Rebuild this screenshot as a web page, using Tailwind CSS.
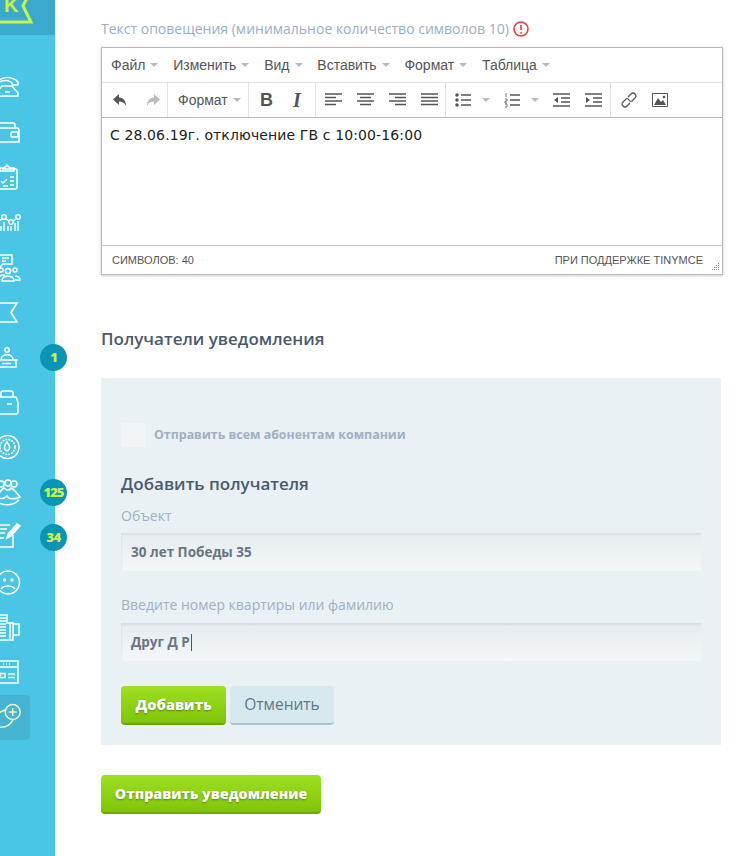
<!DOCTYPE html>
<html lang="ru">
<head>
  <meta charset="UTF-8">
  <title>Отправить уведомление</title>
  <script src="https://cdn.jsdelivr.net/npm/@tailwindcss/browser@4"></script>
</head>
<body class="bg-white overflow-hidden font-['Open_Sans',sans-serif]">
<div class="flex h-[856px] w-[754px] overflow-hidden">

  <!-- sidebar -->
  <aside class="relative w-[55px] shrink-0 bg-[#4ac5e5]">
    <div class="relative h-[35px] overflow-hidden bg-[#3aa9cd]">
      <span class="absolute left-[4px] top-[-7px] font-['Liberation_Sans',sans-serif] text-[20px] leading-[24px] font-bold text-[#c6f545]">K</span>
      <svg class="absolute left-0 top-0" width="40" height="35" fill="none" stroke="#c6f545" stroke-width="3"><path d="M0 22H31L23 6 27 -2"/></svg>
    </div>
    <nav class="mt-[30px] flex flex-col text-white">
      <!-- phone -->
      <svg width="30" height="45" fill="none" stroke="currentColor" stroke-width="1.5"><path d="M-3 18C1 11 12 11 18 17V20L13 20 11 17C8 15 3 15 0 17"/><path d="M-3 31H18V28L12 21H2L-3 27"/><path d="M5 27H10"/></svg>
      <!-- wallet -->
      <svg width="30" height="45" fill="none" stroke="currentColor" stroke-width="1.5"><path d="M-3 13H13Q15 13 15 15V18M-3 18H17Q19 18 19 20V32H-3"/><rect x="11" y="22" width="7" height="5" rx="1"/></svg>
      <!-- clipboard -->
      <svg width="30" height="45" fill="none" stroke="currentColor" stroke-width="1.5"><path d="M2 14H16Q17 14 17 15V32Q17 34 15 34H-3"/><path d="M0 17V13H4L7 10 10 13H14V16H0"/><path d="M1 26 3 28 7 24M10 22H14M10 26H14M10 30H14M3 31H8"/></svg>
      <!-- chart -->
      <svg width="30" height="45" fill="none" stroke="currentColor" stroke-width="1.4"><circle cx="4" cy="17" r="2.200"/><circle cx="11" cy="22" r="2.200"/><circle cx="18" cy="17" r="2.200"/><path d="M-1 21 2 19M6 19 9 21M13 21 16 19M1 31V26M4 31V22M8 31V26M11 31V26M15 31V23M18 31V21"/></svg>
      <!-- people + chat -->
      <svg width="30" height="45" fill="none" stroke="currentColor" stroke-width="1.5"><path d="M0 10H12V19H3L0 22M2 13H9M2 16H6"/><circle cx="1" cy="25" r="2"/><circle cx="8" cy="26" r="2.600"/><circle cx="15" cy="25" r="2"/><path d="M-2 34C-1 30 4 29 5 31M2 35C3 30 13 30 14 35V36H2ZM15 31C17 31 20 32 20 35H15"/></svg>
      <!-- flag -->
      <svg width="30" height="45" fill="none" stroke="currentColor" stroke-width="1.6"><path d="M-3 13H17L11 22.500 17 32H-3"/></svg>
      <!-- desk person -->
      <svg width="30" height="45" fill="none" stroke="currentColor" stroke-width="1.5"><circle cx="7" cy="15" r="2.200"/><path d="M1 25C1 18 13 18 13 25"/><path d="M-3 25H18M16 25V32H-3M2 28.500H11"/></svg>
      <!-- box -->
      <svg width="30" height="45" fill="none" stroke="currentColor" stroke-width="1.5"><path d="M1 17V13Q1 11 3 11H11Q13 11 13 13V17M-3 17H16L18 22V32Q18 34 16 34H-3"/><path d="M7 24H12"/></svg>
      <!-- dial -->
      <svg width="30" height="45" fill="none" stroke="currentColor" stroke-width="1.5"><circle cx="7.500" cy="22" r="11.500"/><circle cx="7.500" cy="22" r="7.500" stroke-dasharray="2 1"/><path d="M7 17C4 21 3 24 7 26 11 24 10 21 7 17Z"/></svg>
      <!-- group -->
      <svg width="30" height="45" fill="none" stroke="currentColor" stroke-width="1.5"><circle cx="1" cy="14" r="3"/><circle cx="8" cy="13" r="3"/><circle cx="14" cy="14" r="3"/><path d="M-3 27C0 21 2 19 4 18 7 21 9 21 11 18 13 19 17 23 20 27 15 30 8 29 7 26 4 29 0 29-3 27ZM-3 32C4 36 13 36 19 30"/></svg>
      <!-- edit -->
      <svg width="30" height="45" fill="none" stroke="currentColor" stroke-width="1.5"><path d="M-3 10H10M-3 14H7M-3 18H5M-3 23H4"/><path d="M7 23 8 19 17 9 20 11 11 21Z" fill="currentColor"/><path d="M13 20V32H-3"/></svg>
      <!-- sad face -->
      <svg width="30" height="45" fill="none" stroke="currentColor" stroke-width="1.5"><circle cx="8" cy="22.500" r="11.500"/><path d="M1 29C4 25 12 25 15 29"/><circle cx="4.500" cy="20" r="1" fill="currentColor"/><circle cx="12" cy="20" r="1" fill="currentColor"/></svg>
      <!-- building -->
      <svg width="30" height="45" fill="none" stroke="currentColor" stroke-width="1.5"><path d="M-3 10H7V18H13V35H-3M13 19H19V30H13"/><path d="M-3 13H6M-3 16H6M-3 19H6M-3 22H6M-3 25H6M-3 28H6M-3 31H6"/><path d="M10 18V35"/></svg>
      <!-- window -->
      <svg width="30" height="45" fill="none" stroke="currentColor" stroke-width="1.5"><path d="M-3 11H18V33H-3M-3 17H18"/><path d="M3 14H4M6 14H7M9 14H10M8 24H15M8 27.500H15"/><rect x="0" y="23.500" width="5" height="4"/></svg>
      <!-- active -->
      <div class="flex h-[45px] w-[30px] rounded-r-[4px] bg-[#45b4d3] text-[#f5f1c0]">
        <svg width="30" height="45" fill="none" stroke="currentColor" stroke-width="1.5"><circle cx="12.700" cy="17" r="7.500"/><path d="M12.700 13V21M8.700 17H16.700"/><path d="M-3 20C-1 17 2 16 5 15M-3 32C4 33 10 32 13 24.500"/></svg>
      </div>
    </nav>
    <span class="absolute left-[40px] top-[344px] flex size-[27px] items-center justify-center rounded-full bg-[#0a95b6] text-[13px] font-extrabold tracking-[-1px] text-[#c6f545]">1</span>
    <span class="absolute left-[40px] top-[479px] flex size-[27px] items-center justify-center rounded-full bg-[#0a95b6] text-[13px] font-extrabold tracking-[-1px] text-[#c6f545]">125</span>
    <span class="absolute left-[40px] top-[524px] flex size-[27px] items-center justify-center rounded-full bg-[#0a95b6] text-[13px] font-extrabold tracking-[-0.5px] text-[#c6f545]">34</span>
  </aside>

  <!-- main -->
  <main class="ml-[46px] w-[622px] shrink-0">
    <div class="flex h-[47px] items-start gap-[4px] pt-[19px] text-[14px] leading-[20px] text-[#9dadc3]">
      Текст оповещения (минимальное количество символов 10)
      <svg class="mt-[2px]" width="16" height="16" fill="none" stroke="#e04040" stroke-width="1.6"><circle cx="8" cy="8" r="7"/><path d="M8 4V9M8 11V12.500"/></svg>
    </div>

    <!-- editor -->
    <div class="h-[228px] border border-[#b9b9b9] bg-white font-['Liberation_Sans',sans-serif] shadow-[0_1px_3px_rgba(0,0,0,0.2)]">
      <div class="flex h-[35px] items-center gap-[14.800px] border-b border-[#e2e2e2] pl-[9px] text-[14px] text-[#555]">
        <span class="flex items-center gap-[5px]">Файл <i class="h-0 w-0 border-x-[4px] border-t-[4px] border-x-transparent border-t-[#bbb]"></i></span>
        <span class="flex items-center gap-[5px]">Изменить <i class="h-0 w-0 border-x-[4px] border-t-[4px] border-x-transparent border-t-[#bbb]"></i></span>
        <span class="flex items-center gap-[5px]">Вид <i class="h-0 w-0 border-x-[4px] border-t-[4px] border-x-transparent border-t-[#bbb]"></i></span>
        <span class="flex items-center gap-[5px]">Вставить <i class="h-0 w-0 border-x-[4px] border-t-[4px] border-x-transparent border-t-[#bbb]"></i></span>
        <span class="flex items-center gap-[5px]">Формат <i class="h-0 w-0 border-x-[4px] border-t-[4px] border-x-transparent border-t-[#bbb]"></i></span>
        <span class="flex items-center gap-[5px]">Таблица <i class="h-0 w-0 border-x-[4px] border-t-[4px] border-x-transparent border-t-[#bbb]"></i></span>
      </div>
      <div class="flex h-[35px] items-stretch border-b border-[#b9b9b9] text-[#444]">
        <div class="flex w-[66px] items-center gap-[17px] border-r border-[#e2e2e2] pl-[10px]">
          <svg width="16" height="16" fill="#555"><path d="M7 2 1 7.500 7 13V9.500C10 9.500 12.500 10.500 14 14 14 8.500 11 5.500 7 5.500Z"/></svg>
          <svg width="16" height="16" fill="#bbb"><path d="M9 2 15 7.500 9 13V9.500C6 9.500 3.500 10.500 2 14 2 8.500 5 5.500 9 5.500Z"/></svg>
        </div>
        <div class="flex w-[81px] items-center gap-[5px] border-r border-[#e2e2e2] pl-[10px] text-[14px] text-[#555]">Формат <i class="h-0 w-0 border-x-[4px] border-t-[4px] border-x-transparent border-t-[#bbb]"></i></div>
        <div class="flex w-[67px] items-center gap-[20px] border-r border-[#e2e2e2] pl-[11px]">
          <span class="w-[13px] font-['Liberation_Sans',sans-serif] text-[18px] font-bold text-[#555]">B</span>
          <span class="w-[11px] font-['Liberation_Serif',serif] text-[20px] font-bold text-[#555] italic">I</span>
        </div>
        <div class="flex w-[130px] items-center gap-[15px] border-r border-[#e2e2e2] pl-[9px]">
          <svg width="17" height="14" stroke="#555" stroke-width="1.5"><path d="M0 1H17M0 4.500H11M0 8H17M0 11.500H11"/></svg>
          <svg width="17" height="14" stroke="#555" stroke-width="1.5"><path d="M0 1H17M3 4.500H14M0 8H17M3 11.500H14"/></svg>
          <svg width="17" height="14" stroke="#555" stroke-width="1.5"><path d="M0 1H17M6 4.500H17M0 8H17M6 11.500H17"/></svg>
          <svg width="17" height="14" stroke="#555" stroke-width="1.5"><path d="M0 1H17M0 4.500H17M0 8H17M0 11.500H17"/></svg>
        </div>
        <div class="flex w-[165px] items-center border-r border-[#e2e2e2] pl-[9px]">
          <svg width="17" height="16" fill="#555" stroke="#555" stroke-width="1.500"><circle cx="2" cy="3" r="1"/><circle cx="2" cy="8" r="1"/><circle cx="2" cy="13" r="1"/><path d="M6 3H16M6 8H16M6 13H16"/></svg>
          <i class="ml-[10px] h-0 w-0 border-x-[4px] border-t-[4px] border-x-transparent border-t-[#bbb]"></i>
          <svg class="ml-[14px]" width="17" height="16" fill="none" stroke="#555"><path d="M2 1V5M1 7H3V9H1V11H3M1 12H3V15H1" stroke-width="0.800"/><path d="M6 3H16M6 8H16M6 13H16" stroke-width="1.500"/></svg>
          <i class="ml-[10px] h-0 w-0 border-x-[4px] border-t-[4px] border-x-transparent border-t-[#bbb]"></i>
          <svg class="ml-[14px]" width="17" height="16" fill="#555" stroke="#555" stroke-width="1.500"><path d="M0 2H17M8 6H17M8 10H17M0 14H17"/><path d="M5 5V11L1 8Z" stroke="none"/></svg>
          <svg class="ml-[15px]" width="17" height="16" fill="#555" stroke="#555" stroke-width="1.500"><path d="M0 2H17M8 6H17M8 10H17M0 14H17"/><path d="M1 5V11L5 8Z" stroke="none"/></svg>
        </div>
        <div class="flex items-center gap-[15px] pl-[10px]">
          <svg width="16" height="16" fill="none" stroke="#555" stroke-width="1.200"><path d="M7 5 10 2Q12 0 14 2T14 6L11 9Q9 10 8 8M9 11 6 14Q4 16 2 14T2 10L5 7Q7 6 8 8"/></svg>
          <svg width="16" height="14" fill="#555"><path d="M.5.500H15.500V13.500H.5Z" fill="none" stroke="#555"/><path d="M2 12 6 5 9 9 11 7 14 12Z"/><circle cx="12" cy="4" r="1.300"/></svg>
        </div>
      </div>
      <div class="h-[128px] border-b border-[#c4c4c4] pl-[8px] pt-[8px] font-['DejaVu_Sans',sans-serif] text-[14px] leading-[18px] tracking-[0.12px] text-[#222]">С 28.06.19г. отключение ГВ с 10:00-16:00</div>
      <div class="relative flex h-[28px] items-center justify-between pl-[10px] pr-[19px] text-[11px] text-[#555]">
        <span>СИМВОЛОВ: 40</span>
        <span>ПРИ ПОДДЕРЖКЕ TINYMCE</span>
        <svg class="absolute bottom-[2px] right-[2px]" width="9" height="9" fill="#888"><path d="M7 0h1v1H7zM5 2h1v1H5zM7 2h1v1H7zM3 4h1v1H3zM5 4h1v1H5zM7 4h1v1H7zM1 6h1v1H1zM3 6h1v1H3zM5 6h1v1H5zM7 6h1v1H7z"/></svg>
      </div>
    </div>

    <h2 class="mt-[52px] text-[17px] leading-[24px] font-semibold text-[#4a5a6c]">Получатели уведомления</h2>

    <!-- recipients -->
    <section class="mt-[27px] h-[367px] w-[620px] bg-[#e9f1f5] px-[20px] pt-[45px]">
      <label class="flex h-[24px] items-center gap-[9px] text-[12.400px] font-bold text-[#a0afc4]">
        <span class="size-[24px] bg-[#f1f5f7]"></span>
        Отправить всем абонентам компании
      </label>
      <h3 class="mt-[25px] text-[17px] leading-[24px] font-semibold text-[#4a5a6c]">Добавить получателя</h3>
      <p class="mt-[10px] text-[14px] leading-[20px] text-[#a0afc4]">Объект</p>
      <div class="mt-[7px] flex h-[38px] items-center bg-gradient-to-b from-[#e5ecef] to-[#f4f7f9] pl-[10px] text-[13.500px] font-bold text-[#69757f] shadow-[inset_1px_2px_2px_rgba(0,0,0,0.05)]">30 лет Победы 35</div>
      <p class="mt-[24px] text-[14px] leading-[20px] text-[#a0afc4]">Введите номер квартиры или фамилию</p>
      <div class="mt-[8px] flex h-[38px] items-center bg-gradient-to-b from-[#e5ecef] to-[#f4f7f9] pl-[10px] text-[13.500px] font-bold text-[#69757f] shadow-[inset_1px_2px_2px_rgba(0,0,0,0.05)]">Друг Д Р<span class="ml-px h-[17px] w-px bg-[#555]"></span></div>
      <div class="mt-[25px] flex gap-[4px]">
        <button class="h-[39px] w-[105px] rounded-[4px] border-b-2 border-[#6ca806] bg-gradient-to-b from-[#9fe01f] to-[#80c408] text-[14.500px] font-extrabold text-white [text-shadow:0_1px_2px_rgba(0,0,0,0.35)]">Добавить</button>
        <button class="h-[39px] w-[104px] rounded-[4px] border-b-2 border-[#a2c3cf] bg-[#d7e9ef] text-[15.500px] text-[#5a7a88]">Отменить</button>
      </div>
    </section>

    <button class="mt-[30px] h-[39px] w-[220px] rounded-[4px] border-b-2 border-[#6ca806] bg-gradient-to-b from-[#9fe01f] to-[#80c408] text-[14.300px] font-extrabold text-white [text-shadow:0_1px_2px_rgba(0,0,0,0.35)]">Отправить уведомление</button>
  </main>
</div>
</body>
</html>
